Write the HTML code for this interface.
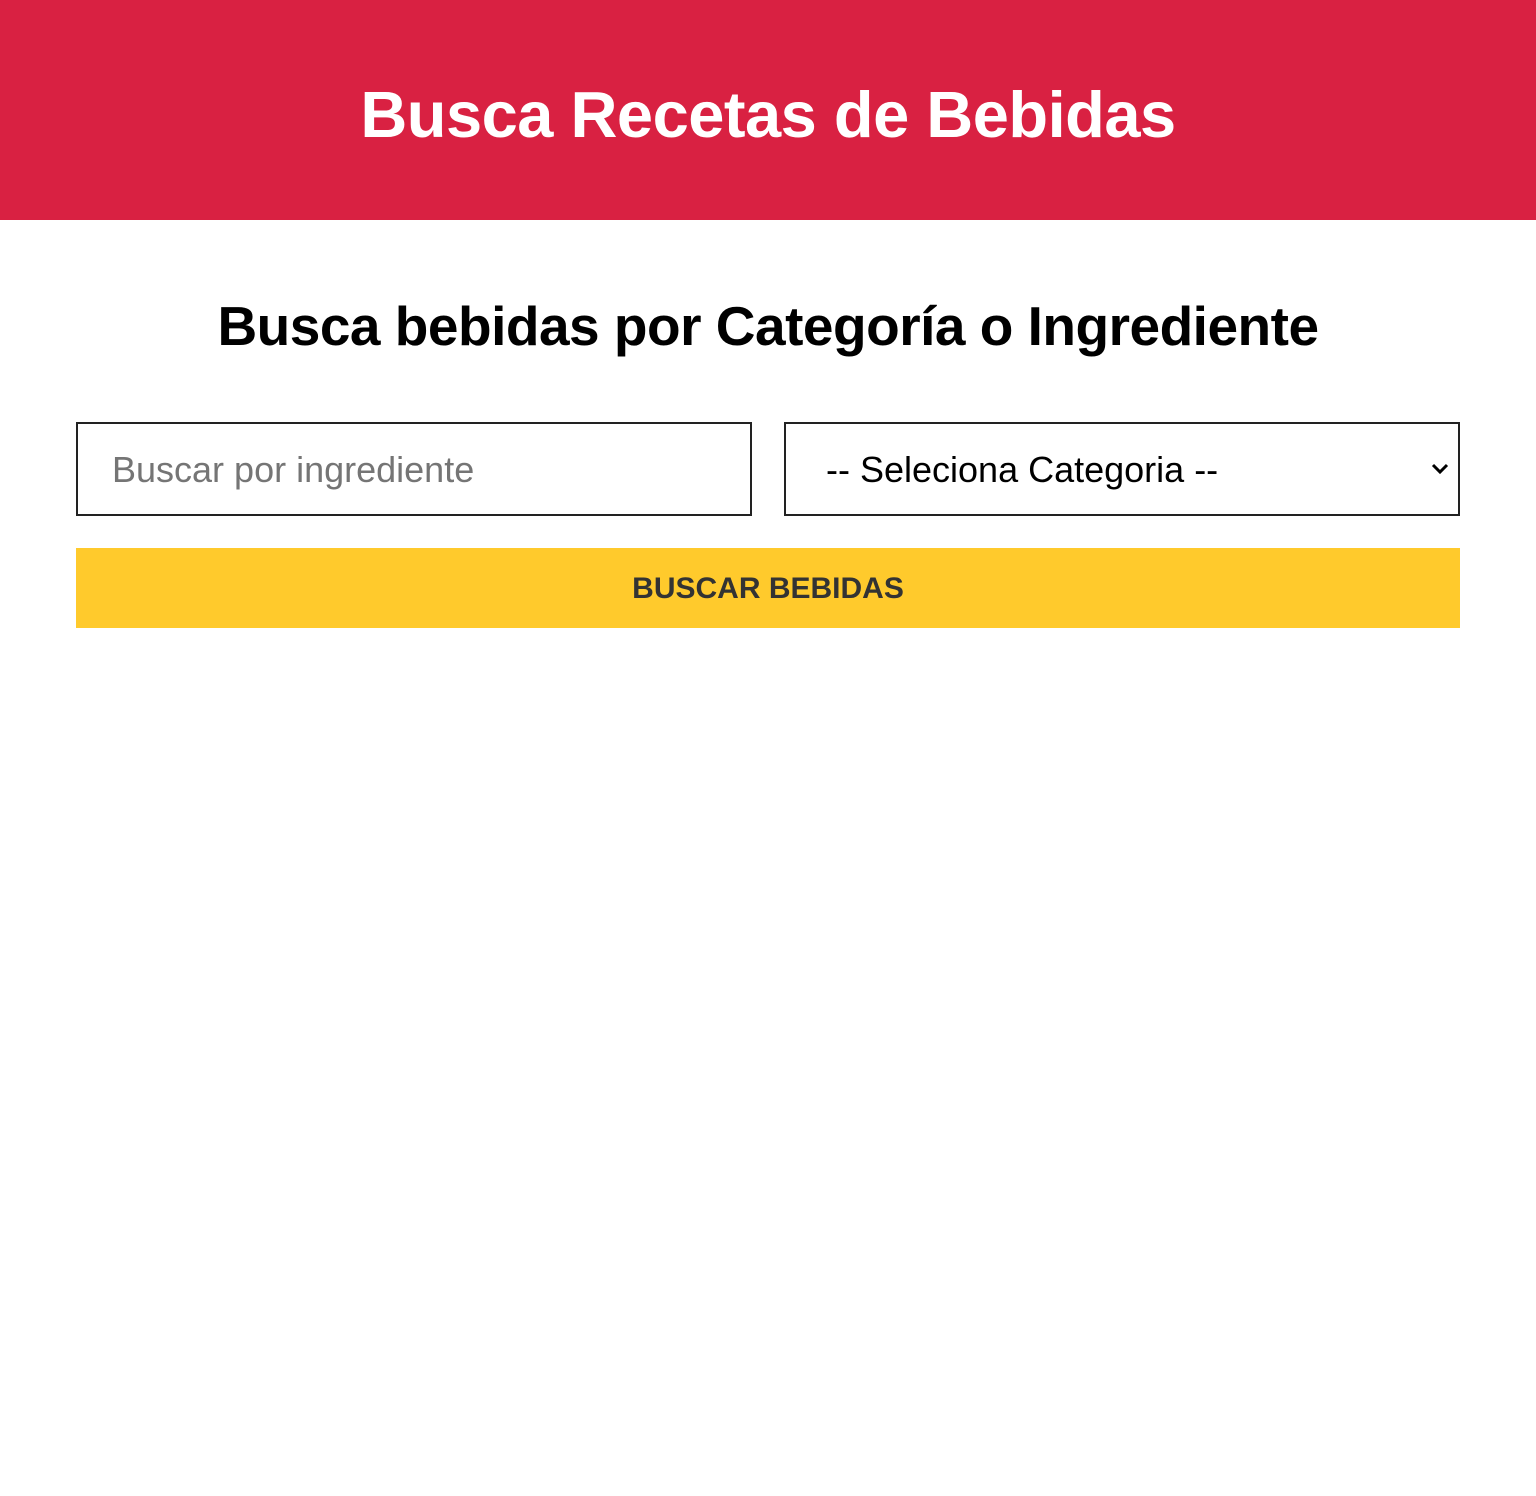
<!DOCTYPE html>
<html><head><meta charset="utf-8"><style>
*{box-sizing:border-box;margin:0;padding:0}
body{width:1536px;height:1496px;background:#fff;font-family:"Liberation Sans",sans-serif;overflow:hidden}
header{height:220px;background:#D92142;display:flex;align-items:center;justify-content:center}
header h1{color:#fff;font-size:65px;font-weight:bold;letter-spacing:-0.5px;margin-top:8px}
h2{text-align:center;font-size:55px;font-weight:bold;margin-top:76px;height:80px;line-height:60px;letter-spacing:-0.5px;color:#000}
.row{position:absolute;top:422px;left:76px;width:1384px;height:94px}
.box{position:absolute;top:0;height:94px;width:676px;border:2px solid #222;font-size:36px;line-height:92px}
.in{left:0;padding-left:34px;color:#757575}
.sel{left:708px;padding-left:40px;color:#000}
.sel svg{position:absolute;right:8px;top:38px}
.btn{position:absolute;top:548px;left:76px;width:1384px;height:80px;background:#FFCA2C;color:#333;font-weight:bold;font-size:30px;text-align:center;line-height:82px}
</style></head><body>
<header><h1>Busca Recetas de Bebidas</h1></header>
<h2>Busca bebidas por Categoría o Ingrediente</h2>
<div class="row">
<div class="box in">Buscar por ingrediente</div>
<div class="box sel">-- Seleciona Categoria --<svg width="20" height="14" viewBox="0 0 20 14"><path d="M3 3 L10 10 L17 3" fill="none" stroke="#000" stroke-width="3"/></svg></div>
</div>
<div class="btn">BUSCAR BEBIDAS</div>
</body></html>
